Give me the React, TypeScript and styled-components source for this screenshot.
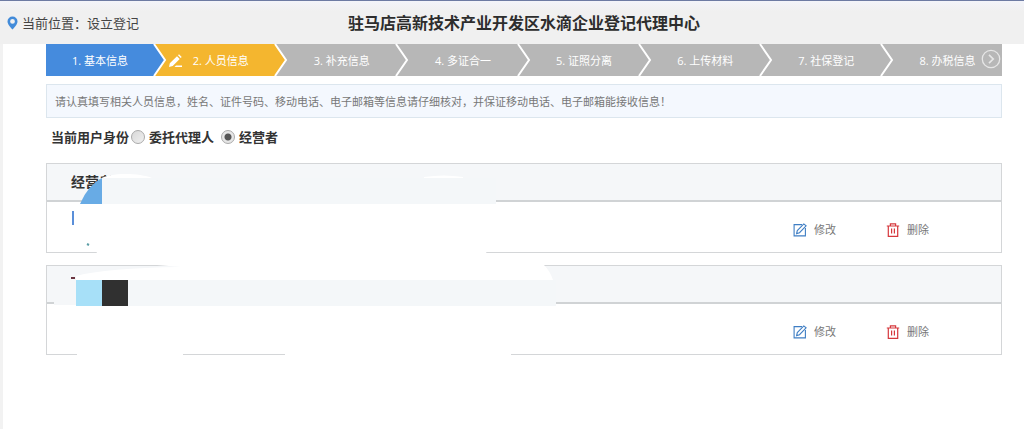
import React, { useState } from "react";
import styled, { createGlobalStyle } from "styled-components";

const GlobalStyle = createGlobalStyle`
  *, *::before, *::after { box-sizing: border-box; }
  body {
    margin: 0;
    background: #fff;
    color: #333;
    font-family: "Open Sans", "Noto Sans CJK SC", sans-serif;
  }
`;

const Page = styled.div`
  display: flex;
  flex-direction: column;
  min-height: 100vh;
`;

const Header = styled.header`
  display: flex;
  align-items: center;
  height: 44px;
  border-top: 1px solid #6d7ba3;
  background: linear-gradient(#f3f4fa, #f0f0f0 10px);
`;

const Location = styled.div`
  display: flex;
  align-items: center;
  flex: 0 0 150px;
  gap: 4px;
  padding-left: 7px;
  font-size: 13px;
  line-height: 20px;
  white-space: nowrap;
  color: #444;
`;

const Title = styled.h1`
  flex: 1;
  margin: 0 126px 0 0;
  text-align: center;
  font-size: 16px;
  line-height: 24px;
  font-weight: 700;
  color: #2d2d2d;
`;

const Main = styled.main`
  flex: 1;
  border-left: 3px solid #f2f2f2;
  padding: 0 22px 16px 43px;
`;

const Steps = styled.ol`
  display: flex;
  height: 32px;
  margin: 0 0 8px;
  padding: 0;
  list-style: none;
`;

const Step = styled.li<{ $color: string; $first?: boolean }>`
  position: relative;
  display: flex;
  align-items: center;
  justify-content: center;
  flex: 1 1 ${(p) => (p.$first ? "108px" : "121px")};
  padding-top: 2px;
  padding-left: ${(p) => (p.$first ? "0" : "12px")};
  background: ${(p) => p.$color};
  color: #fff;
  font-size: 11px;
  line-height: 16px;
  white-space: nowrap;
`;

const Chevron = styled.svg`
  position: absolute;
  z-index: 1;
  top: 0;
  left: 100%;
  overflow: visible;
`;

const StepPencil = styled.svg`
  position: absolute;
  top: 10px;
  left: 15px;
`;

const NextButton = styled.button`
  position: absolute;
  top: 5px;
  right: 1px;
  display: flex;
  padding: 0;
  border: 0;
  background: none;
  cursor: pointer;
`;

const Tip = styled.p`
  margin: 0;
  padding: 9px 8px 7px;
  border: 1px solid #dce6ee;
  background: #f4f8fe;
  color: #777;
  font-size: 11px;
  line-height: 16px;
`;

const Identity = styled.fieldset`
  display: flex;
  align-items: center;
  margin: 9px 0 16px;
  padding: 0 0 0 5px;
  border: 0;
  font-size: 13px;
  line-height: 20px;
  font-weight: 700;
  color: #333;
`;

const Choice = styled.label`
  display: flex;
  align-items: center;
  gap: 4px;
  margin-right: 7px;
`;

const IdentityName = styled.span`
  margin-right: 2px;
`;

const Radio = styled.input`
  appearance: none;
  width: 14px;
  height: 14px;
  margin: 0;
  border: 1px solid #aaa;
  border-radius: 50%;
  background: linear-gradient(135deg, #d8d8d8, #f0f0f0);
  &:checked {
    background: radial-gradient(circle, #555 0 3px, #e6e6e6 4px);
  }
`;

const People = styled.div`
  position: relative;
  display: flex;
  flex-direction: column;
  gap: 12px;
`;

const Card = styled.section`
  border: 1px solid #d4d6d8;
`;

const CardTitle = styled.h2`
  height: 38px;
  margin: 0;
  padding-left: 24px;
  border-bottom: 2px solid #d0d3d5;
  background: #f5f7f9;
  font-size: 14px;
  line-height: 36px;
  font-weight: 700;
`;

const CardBody = styled.div`
  display: flex;
  justify-content: flex-end;
  align-items: center;
  gap: 50px;
  height: 50px;
  padding: 6px 72px 0 0;
`;

const Action = styled.button`
  display: flex;
  align-items: center;
  gap: 7px;
  padding: 0;
  border: 0;
  background: none;
  color: #777;
  font-family: inherit;
  font-size: 11px;
  line-height: 16px;
  cursor: pointer;
`;

const Masks = styled.svg`
  position: absolute;
  top: 0;
  left: 0;
  pointer-events: none;
`;

const STEPS = ["基本信息", "人员信息", "补充信息", "多证合一", "证照分离", "上传材料", "社保登记", "办税信息"];
const stepColor = (i: number) => (i === 0 ? "#458bdd" : i === 1 ? "#f4b62f" : "#b7b7b7");

const EditIcon = () => (
  <svg width="14" height="14" viewBox="0 0 14 14" fill="none" stroke="#3f7ec4" strokeWidth="1.1">
    <path d="M9 1.600H1.100v11.300h11.300V5" />
    <path d="M3.600 10.600l.7-3L10.800.9l2.300 1.900-6.600 6.900z" />
  </svg>
);

const TrashIcon = () => (
  <svg width="14" height="14" viewBox="0 0 14 14" fill="none" stroke="#d6383d" strokeWidth="1.2">
    <path d="M.8 3h12.400M4.400 3V.8h5.200V3M2.300 3v10.300h9.400V3M5.600 5.600v4.800M8.400 5.600v4.800" />
  </svg>
);

function PersonCard({ title }: { title: string }) {
  return (
    <Card>
      <CardTitle>{title}</CardTitle>
      <CardBody>
        <Action type="button"><EditIcon />修改</Action>
        <Action type="button"><TrashIcon />删除</Action>
      </CardBody>
    </Card>
  );
}

export default function App() {
  const [role, setRole] = useState("operator");
  return (
    <Page>
      <GlobalStyle />
      <Header>
        <Location>
          <svg width="11" height="14" viewBox="0 0 11 14">
            <path fillRule="evenodd" fill="#428bd9" d="M5.500.5a5 5 0 0 1 5 5c0 2.800-3 5.800-5 8-2-2.200-5-5.200-5-8a5 5 0 0 1 5-5zm0 2.500a2.400 2.400 0 1 0 0 4.800 2.400 2.400 0 0 0 0-4.800z" />
          </svg>
          当前位置：设立登记
        </Location>
        <Title>驻马店高新技术产业开发区水滴企业登记代理中心</Title>
      </Header>
      <Main>
        <Steps>
          {STEPS.map((name, i) => (
            <Step key={name} $color={stepColor(i)} $first={i === 0}>
              {i === 1 && (
                <StepPencil width="14" height="14" viewBox="0 0 14 14" fill="#fff">
                  <path d="M0 13l.8-3.800L8 2.200l2.700 2.700-7 7.200zM9 1.300l1-1L12.700 3l-1 1zM7 11.400h6V13H5.500z" />
                </StepPencil>
              )}
              {i + 1}. {name}
              {i < STEPS.length - 1 ? (
                <Chevron width="12" height="32" viewBox="0 0 12 32">
                  <path d="M-1 0H0L11 16 0 32H-1z" fill={stepColor(i)} />
                  <path d="M0 0L11 16 0 32" fill="none" stroke="#fff" strokeWidth="2" />
                </Chevron>
              ) : (
                <NextButton type="button" aria-label="下一步">
                  <svg width="20" height="20" viewBox="0 0 20 20" fill="none" stroke="#e6e6e6">
                    <circle cx="10" cy="10" r="8.700" strokeWidth="1.300" />
                    <path d="M8 5.800l4.200 4.200L8 14.200" strokeWidth="1.700" />
                  </svg>
                </NextButton>
              )}
            </Step>
          ))}
        </Steps>
        <Tip>请认真填写相关人员信息，姓名、证件号码、移动电话、电子邮箱等信息请仔细核对，并保证移动电话、电子邮箱能接收信息！</Tip>
        <Identity aria-label="当前用户身份">
          <IdentityName>当前用户身份</IdentityName>
          <Choice>
            <Radio type="radio" name="role" checked={role === "agent"} onChange={() => setRole("agent")} />
            委托代理人
          </Choice>
          <Choice>
            <Radio type="radio" name="role" checked={role === "operator"} onChange={() => setRole("operator")} />
            经营者
          </Choice>
        </Identity>
        <People>
          <PersonCard title="经营者" />
          <PersonCard title="" />
          <Masks width="520" height="196" viewBox="0 0 520 196" aria-hidden="true">
            {/* painted-over details of the first person */}
            <path d="M55 16l5-3" stroke="#444" strokeWidth="1.500" />
            <path d="M54 16C64 9 94 10 106 15V19H54z" fill="#fff" />
            <path d="M378 14q20-3 39 0v1h-39z" fill="#fff" />
            <path d="M34 41Q42 22 56 15V41z" fill="#68abe5" />
            <path d="M56 15H450V41H56z" fill="#f4f7f9" />
            <path d="M34 41H450L440 91H52L34 70z" fill="#fff" />
            <path d="M26 48h2v14h-2z" fill="#5a8fd9" />
            <path d="M41 81l2 1" stroke="#5a9da5" strokeWidth="2" />
            {/* painted-over details of the second person */}
            <path d="M30 117V113Q60 105 135 104L111 102H498Q504 108 507 117z" fill="#fff" />
            <path d="M8 138H30V142H8z" fill="#f5f7f9" />
            <path d="M25 115h4" stroke="#6b3540" strokeWidth="2" />
            <path d="M30 117H510V143H30z" fill="#f4f7f9" />
            <path d="M30 117H56V143H30z" fill="#a7e0f8" />
            <path d="M56 117H82V143H56z" fill="#303030" />
            <path d="M31 190H137V193H31zM239 190H465V193H239z" fill="#fff" />
          </Masks>
        </People>
      </Main>
    </Page>
  );
}
